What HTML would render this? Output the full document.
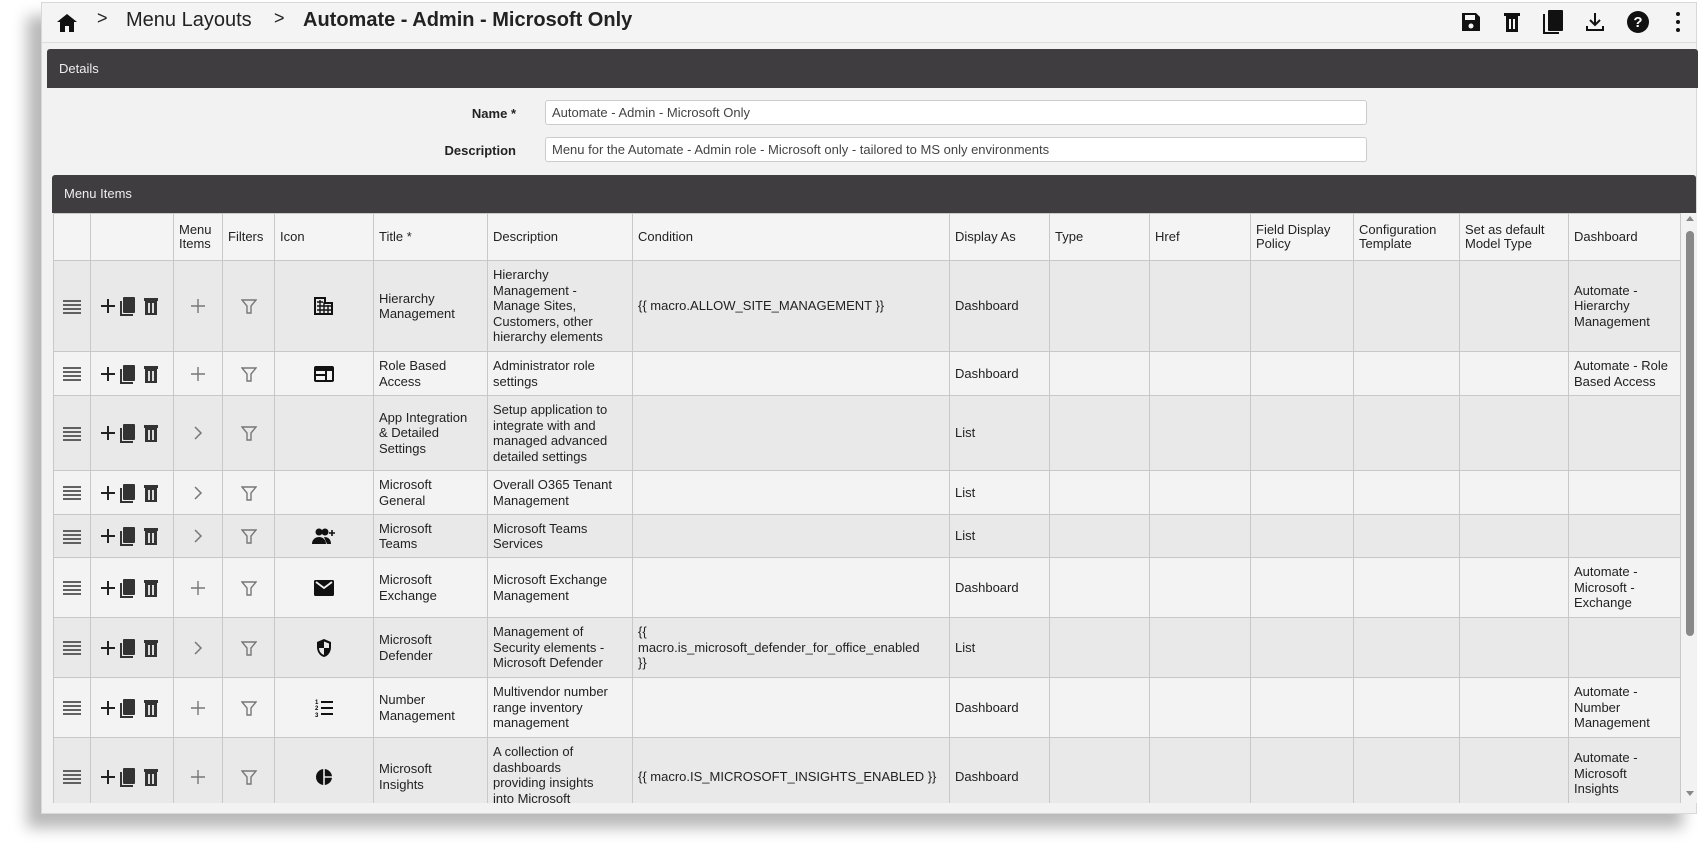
<!DOCTYPE html>
<html><head><meta charset="utf-8"><style>
*{box-sizing:border-box;margin:0;padding:0}
body{width:1706px;height:851px;background:#fff;font-family:"Liberation Sans Narrow","Liberation Sans",sans-serif;color:#222;position:relative;overflow:hidden}
.card{position:absolute;left:41px;top:2px;width:1656px;height:812px;background:#f2f2f2;border:1px solid #d8d8d8;box-shadow:-14px 14px 14px rgba(0,0,0,.28)}
.top{position:absolute;left:0;top:0;width:1654px;height:40px;background:#f4f4f4;border-bottom:1px solid #ddd}
.crumb{position:absolute;left:84px;top:6px;font-family:"Liberation Sans",sans-serif;font-size:20px;color:#222;white-space:nowrap}
.crumb b{font-weight:bold}
.bar{position:absolute;background:#3f3d40;color:#eee;font-size:13px;padding-left:12px;border-radius:3px 3px 0 0}
.lbl{position:absolute;font-size:13px;font-weight:bold;text-align:right;width:200px}
.inp{position:absolute;background:#fff;border:1px solid #ccc;border-radius:3px;font-size:13px;color:#444;padding:4px 6px;height:25px}
.tw{position:absolute;left:11px;top:210px;width:1643px;height:590px;overflow:hidden}
table{border-collapse:collapse;table-layout:fixed;font-size:13px;line-height:15.5px}
td,th{border:1px solid #c8c8c8;vertical-align:middle;padding:0 5px;text-align:left;font-weight:normal;overflow:hidden;white-space:nowrap}
th{background:#f4f4f4;height:47px}
tr.o td{background:#e9e9e9}
tr.e td{background:#f3f3f3}
.c{text-align:center;padding:0}
svg{vertical-align:middle}
.sb{position:absolute;left:1640px;top:210px;width:15px;height:590px;background:#f2f2f2}
</style></head><body>
<div class="card">
 <div class="top">
  <svg style="position:absolute;left:14px;top:10px" width="22" height="20" viewBox="0 0 22 20"><path d="M11 1L1 9h3v10h5v-6h4v6h5V9h3z" fill="#111"/></svg>
  <div class="crumb" style="left:55px;top:5px;font-size:18px">&gt;</div>
  <div class="crumb" style="left:84px">Menu Layouts</div>
  <div class="crumb" style="left:232px;top:5px;font-size:18px">&gt;</div>
  <div class="crumb" style="left:261px"><b>Automate - Admin - Microsoft Only</b></div>
  <svg style="position:absolute;left:1418px;top:8px" width="22" height="22" viewBox="0 0 22 22"><path d="M2 2h14l4 4v14H2z" fill="#111"/><rect x="5" y="4" width="10" height="5" fill="#f4f4f4"/><circle cx="11" cy="15" r="2.5" fill="#f4f4f4"/></svg>
  <svg style="position:absolute;left:1461px;top:8px" width="18" height="22" viewBox="0 0 18 22"><rect x="1" y="2" width="16" height="3" fill="#111"/><rect x="3" y="5" width="12" height="16" fill="#111"/><rect x="6" y="8" width="2" height="10" fill="#f4f4f4"/><rect x="10" y="8" width="2" height="10" fill="#f4f4f4"/></svg>
  <svg style="position:absolute;left:1500px;top:6px" width="22" height="26" viewBox="0 0 22 26"><rect x="6" y="1" width="15" height="21" rx="1" fill="#111"/><path d="M2 5v19h15" stroke="#111" stroke-width="2" fill="none"/></svg>
  <svg style="position:absolute;left:1542px;top:8px" width="22" height="22" viewBox="0 0 22 22"><path d="M11 2v12M6 9l5 5 5-5M3 15v4h16v-4" stroke="#111" stroke-width="2" fill="none"/></svg>
  <svg style="position:absolute;left:1584px;top:7px" width="24" height="24" viewBox="0 0 24 24"><circle cx="12" cy="12" r="11" fill="#111"/><text x="12" y="17" font-size="15" font-weight="bold" fill="#fff" text-anchor="middle" font-family="Liberation Sans">?</text></svg>
  <svg style="position:absolute;left:1633px;top:8px" width="6" height="22" viewBox="0 0 6 22"><circle cx="3" cy="3" r="2" fill="#111"/><circle cx="3" cy="11" r="2" fill="#111"/><circle cx="3" cy="19" r="2" fill="#111"/></svg>
 </div>
 <div class="bar" style="left:5px;top:46px;width:1651px;height:39px;line-height:39px">Details</div>
 <div class="lbl" style="left:274px;top:103px">Name *</div>
 <div class="inp" style="left:503px;top:97px;width:822px">Automate - Admin - Microsoft Only</div>
 <div class="lbl" style="left:274px;top:140px">Description</div>
 <div class="inp" style="left:503px;top:134px;width:822px">Menu for the Automate - Admin role - Microsoft only - tailored to MS only environments</div>
 <div class="bar" style="left:10px;top:172px;width:1644px;height:38px;line-height:38px">Menu Items</div>
 <div class="tw">
 <table>
 <colgroup><col style="width:37px"><col style="width:83px"><col style="width:49px"><col style="width:52px"><col style="width:99px"><col style="width:114px"><col style="width:145px"><col style="width:317px"><col style="width:100px"><col style="width:100px"><col style="width:101px"><col style="width:103px"><col style="width:106px"><col style="width:109px"><col style="width:112px"></colgroup>
 <tr><th></th><th></th><th style="line-height:14px">Menu<br>Items</th><th>Filters</th><th>Icon</th><th>Title *</th><th>Description</th><th>Condition</th><th>Display As</th><th>Type</th><th>Href</th><th style="line-height:14px">Field Display<br>Policy</th><th style="line-height:14px">Configuration<br>Template</th><th style="line-height:14px">Set as default<br>Model Type</th><th>Dashboard</th></tr>
 <tr class="o" style="height:91px"><td class="c">H</td><td class="c">A</td><td class="c">P</td><td class="c">F</td><td class="c"><svg width="20" height="18" viewBox="0 0 20 18"><path d="M1 1h10v5h7v11H1z" fill="none" stroke="#111" stroke-width="2"/><path d="M3 5h6M3 9h14M3 13h14M6 3v14M10 5v12M14 8v9" stroke="#111" stroke-width="1.4"/></svg></td><td>Hierarchy<br>Management</td><td>Hierarchy<br>Management -<br>Manage Sites,<br>Customers, other<br>hierarchy elements</td><td>{{ macro.ALLOW_SITE_MANAGEMENT }}</td><td>Dashboard</td><td></td><td></td><td></td><td></td><td></td><td>Automate -<br>Hierarchy<br>Management</td></tr>
 <tr class="e" style="height:44px"><td class="c">H</td><td class="c">A</td><td class="c">P</td><td class="c">F</td><td class="c"><svg width="20" height="16" viewBox="0 0 20 16"><rect x="1" y="1" width="18" height="14" rx="1" fill="none" stroke="#111" stroke-width="2"/><rect x="1" y="1" width="18" height="4" fill="#111"/><path d="M2 9h10M12 5v10" stroke="#111" stroke-width="2"/></svg></td><td>Role Based<br>Access</td><td>Administrator role<br>settings</td><td></td><td>Dashboard</td><td></td><td></td><td></td><td></td><td></td><td>Automate - Role<br>Based Access</td></tr>
 <tr class="o" style="height:75px"><td class="c">H</td><td class="c">A</td><td class="c">C</td><td class="c">F</td><td></td><td>App Integration<br>&amp; Detailed<br>Settings</td><td>Setup application to<br>integrate with and<br>managed advanced<br>detailed settings</td><td></td><td>List</td><td></td><td></td><td></td><td></td><td></td><td></td></tr>
 <tr class="e" style="height:44px"><td class="c">H</td><td class="c">A</td><td class="c">C</td><td class="c">F</td><td></td><td>Microsoft<br>General</td><td>Overall O365 Tenant<br>Management</td><td></td><td>List</td><td></td><td></td><td></td><td></td><td></td><td></td></tr>
 <tr class="o" style="height:43px"><td class="c">H</td><td class="c">A</td><td class="c">C</td><td class="c">F</td><td class="c"><svg width="24" height="18" viewBox="0 0 24 18"><circle cx="7" cy="5" r="3.5" fill="#111"/><circle cx="13" cy="5" r="3.5" fill="#111"/><path d="M0 17c0-5 4-7 7-7s7 2 7 7zM12 10c4 0 7 2 7 7h-4" fill="#111"/><path d="M20 3v6M17 6h6" stroke="#111" stroke-width="1.6"/></svg></td><td>Microsoft<br>Teams</td><td>Microsoft Teams<br>Services</td><td></td><td>List</td><td></td><td></td><td></td><td></td><td></td><td></td></tr>
 <tr class="e" style="height:60px"><td class="c">H</td><td class="c">A</td><td class="c">P</td><td class="c">F</td><td class="c"><svg width="20" height="16" viewBox="0 0 20 16"><rect x="0" y="0" width="20" height="16" rx="1.5" fill="#111"/><path d="M2 2l8 6 8-6" stroke="#f3f3f3" stroke-width="1.8" fill="none"/></svg></td><td>Microsoft<br>Exchange</td><td>Microsoft Exchange<br>Management</td><td></td><td>Dashboard</td><td></td><td></td><td></td><td></td><td></td><td>Automate -<br>Microsoft -<br>Exchange</td></tr>
 <tr class="o" style="height:60px"><td class="c">H</td><td class="c">A</td><td class="c">C</td><td class="c">F</td><td class="c"><svg width="16" height="20" viewBox="0 0 16 20"><path d="M8 1L1 4v5c0 5 3 9 7 10 4-1 7-5 7-10V4z" fill="#111"/><path d="M8 3v7H3c0 3 2 6 5 7zM8 10h5V5.5L8 3.5z" fill="#e9e9e9"/><path d="M8 10v7c3-1 5-4 5-7z" fill="#111"/></svg></td><td>Microsoft<br>Defender</td><td>Management of<br>Security elements -<br>Microsoft Defender</td><td>{{<br>macro.is_microsoft_defender_for_office_enabled<br>}}</td><td>List</td><td></td><td></td><td></td><td></td><td></td><td></td></tr>
 <tr class="e" style="height:60px"><td class="c">H</td><td class="c">A</td><td class="c">P</td><td class="c">F</td><td class="c"><svg width="18" height="20" viewBox="0 0 18 20"><path d="M6 4h12M6 10h12M6 16h12" stroke="#111" stroke-width="2"/><text x="0" y="6" font-size="6" font-family="Liberation Sans" font-weight="bold">1</text><text x="0" y="12" font-size="6" font-family="Liberation Sans" font-weight="bold">2</text><text x="0" y="19" font-size="6" font-family="Liberation Sans" font-weight="bold">3</text></svg></td><td>Number<br>Management</td><td>Multivendor number<br>range inventory<br>management</td><td></td><td>Dashboard</td><td></td><td></td><td></td><td></td><td></td><td>Automate -<br>Number<br>Management</td></tr>
 <tr class="o" style="height:78px"><td class="c">H</td><td class="c">A</td><td class="c">P</td><td class="c">F</td><td class="c"><svg width="18" height="18" viewBox="0 0 18 18"><circle cx="9" cy="9" r="8" fill="#111"/><path d="M9 1v16M9 9h8" stroke="#e9e9e9" stroke-width="1.6"/></svg></td><td>Microsoft<br>Insights</td><td style="vertical-align:top;padding-top:6px">A collection of<br>dashboards<br>providing insights<br>into Microsoft</td><td>{{ macro.IS_MICROSOFT_INSIGHTS_ENABLED }}</td><td>Dashboard</td><td></td><td></td><td></td><td></td><td></td><td style="vertical-align:top;padding-top:12px">Automate -<br>Microsoft<br>Insights</td></tr>
 </table>
 </div>
 <div class="sb"><div style="position:absolute;left:4px;top:3px;width:0;height:0;border-left:4px solid transparent;border-right:4px solid transparent;border-bottom:5px solid #888"></div><div style="position:absolute;left:4px;top:18px;width:8px;height:405px;background:#888;border-radius:4px"></div><div style="position:absolute;left:4px;top:578px;width:0;height:0;border-left:4px solid transparent;border-right:4px solid transparent;border-top:5px solid #888"></div></div>
</div>
<script>
var H='<svg width="18" height="14" viewBox="0 0 18 14"><path d="M0 1h18M0 5h18M0 9h18M0 13h18" stroke="#333" stroke-width="1.5"/></svg>';
var A='<svg width="64" height="22" viewBox="0 0 64 22"><path d="M8 4v14M1 11h14" stroke="#222" stroke-width="2"/><path d="M21 6v14h12" stroke="#333" stroke-width="2" fill="none"/><rect x="23" y="2" width="12" height="16" rx="1" fill="#333"/><rect x="44" y="3" width="14" height="3" fill="#333"/><rect x="45" y="6" width="12" height="14" fill="#333"/><rect x="48" y="8" width="2" height="10" fill="#ddd"/><rect x="52" y="8" width="2" height="10" fill="#ddd"/></svg>';
var P='<svg width="16" height="16" viewBox="0 0 16 16"><path d="M8 1v14M1 8h14" stroke="#777" stroke-width="1.4"/></svg>';
var C='<svg width="10" height="16" viewBox="0 0 10 16"><path d="M2 2l6 6-6 6" stroke="#777" stroke-width="1.5" fill="none"/></svg>';
var F='<svg width="16" height="16" viewBox="0 0 16 16"><path d="M1 2h14l-5 6v7H6V8z" stroke="#777" stroke-width="1.4" fill="none"/></svg>';
document.querySelectorAll('td.c').forEach(function(t){var m={H:H,A:A,P:P,C:C,F:F};if(m[t.textContent])t.innerHTML=m[t.textContent];});
</script>
</body></html>
